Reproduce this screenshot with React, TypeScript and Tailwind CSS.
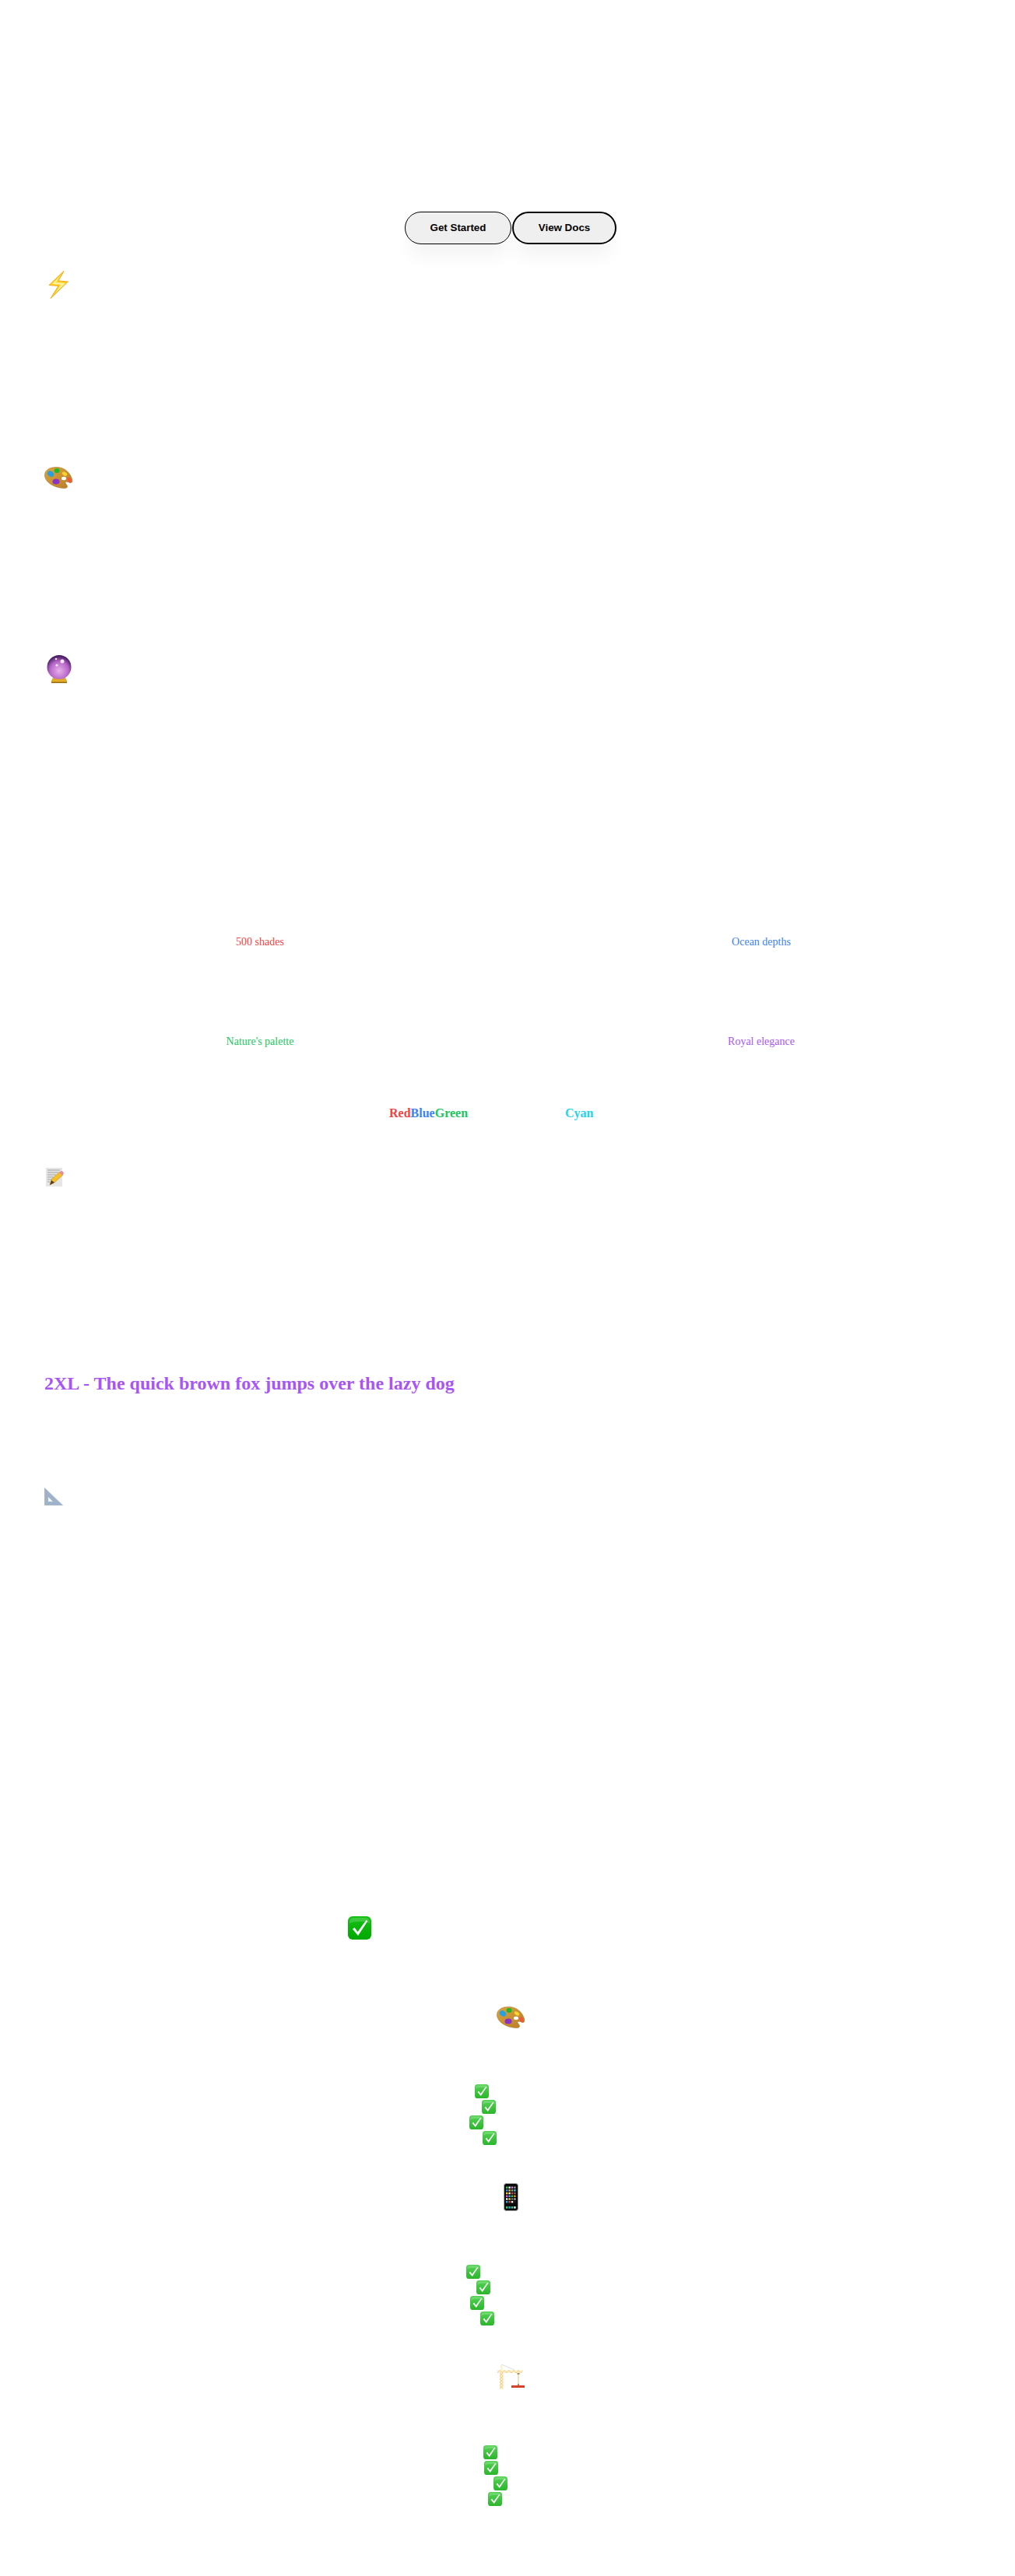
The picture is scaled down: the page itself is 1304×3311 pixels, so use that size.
import { useId } from "react";

function Bolt() {
  return (
    <svg width="25" height="36" viewBox="0 0 25 36" className="block ml-[7px] mt-[34px]">
      <path d="M19 .5 0 18.500l12 1L2 35.500l22.500-21.500-12.500-1z" fill="#ffd21f" />
      <path d="M15 6 4 17l11 1-7 11 13-13-12-1z" fill="#fff1a0" />
      <path d="M19 .5 0 18.500l12 1L2 35.500l22.500-21.500-12.500-1z" fill="none" stroke="#f9a61a" strokeWidth="1" />
    </svg>
  );
}

function Palette({ className }: { className: string }) {
  const id = useId();
  return (
    <svg width="36" height="29" viewBox="0 0 36 29" className={className}>
      <defs>
        <linearGradient id={id} x1="0" y1="0" x2="1" y2="1">
          <stop offset="0" stopColor="#dba63d" />
          <stop offset="1" stopColor="#b87c28" />
        </linearGradient>
      </defs>
      <path
        d="M.5 10C1 3 9 0 17 .5c9 .5 16 7 18.500 15 1 3 0 5.500-2 5-2-.5-4-2-6-1-1.500 1 1 3 2 5 .5 2.500-2 3.500-5 3C13 27 0 20 .5 10z"
        fill={`url(#${id})`}
        stroke="#9d6a22"
        strokeWidth=".5"
      />
      <ellipse cx="8" cy="9" rx="4.500" ry="3.500" transform="rotate(35 8 9)" fill="#2a9fe0" />
      <ellipse cx="16" cy="5" rx="3.500" ry="3" fill="#1fb82a" />
      <ellipse cx="26" cy="9" rx="3.500" ry="2.200" transform="rotate(30 26 9)" fill="#f6d32a" />
      <ellipse cx="32" cy="17" rx="2.200" ry="3.500" transform="rotate(-25 32 17)" fill="#f2573a" />
      <ellipse cx="15" cy="19" rx="4.500" ry="3.500" fill="#8a32c8" />
      <ellipse cx="25" cy="15" rx="3" ry="2.200" fill="#ffffff" />
    </svg>
  );
}

function CrystalBall() {
  const id = useId();
  return (
    <svg width="32" height="36" viewBox="0 0 32 36" className="block ml-[4px] mt-[213px]">
      <defs>
        <radialGradient id={id} cx=".5" cy=".65" r=".6">
          <stop offset="0" stopColor="#eab0ec" />
          <stop offset=".65" stopColor="#b565c6" />
          <stop offset="1" stopColor="#4a1f66" />
        </radialGradient>
      </defs>
      <path d="M8 29h16l2 4c1 2-1 3-3 3H9c-2 0-4-1-3-3z" fill="#e0ac28" />
      <path d="M6 34.500h20V36H6z" fill="#9a6d12" />
      <circle cx="16" cy="15.500" r="15.500" fill={`url(#${id})`} />
      <circle cx="20" cy="8" r="2.500" fill="#fbe4fb" />
      <circle cx="12" cy="5" r="1.300" fill="#fbe4fb" />
      <circle cx="13" cy="13" r="1.600" fill="#fbe4fb" />
    </svg>
  );
}

function Notepad() {
  return (
    <svg width="23" height="24" viewBox="0 0 23 24" className="block ml-[3px] mt-[58px]">
      <rect x="0" y="0" width="21" height="24" fill="#e6e6e6" />
      <path d="M2 3h16M2 6h14M2 9h11M2 12h8M2 15h6M2 18h3" stroke="#a0a0a0" strokeWidth="1" />
      <path d="M5 22 7 15 18 5l4 4-11 10z" fill="#f4bf2a" stroke="#c98d14" strokeWidth=".6" />
      <path d="M17 6l3-2c1 0 3 2 3 3l-2 3z" fill="#e78a9c" />
      <path d="M5 22l2-6 4 3z" fill="#4d4030" />
    </svg>
  );
}

function SetSquare() {
  return (
    <svg width="24" height="23" viewBox="0 0 24 23" className="block ml-[1px] mt-[118px]">
      <path d="M0 0 24 23H0zM5 12v6h6z" fillRule="evenodd" fill="#9fb2c9" stroke="#b9c8d8" strokeWidth=".5" />
    </svg>
  );
}

function Check({ size, from, to, className }: { size: number; from: string; to: string; className: string }) {
  const id = useId();
  return (
    <svg width={size} height={size} viewBox="0 0 30 30" className={className}>
      <defs>
        <linearGradient id={id} x1="0" y1="0" x2="0" y2="1">
          <stop offset="0" stopColor={from} />
          <stop offset="1" stopColor={to} />
        </linearGradient>
      </defs>
      <rect width="30" height="30" rx="6" fill={`url(#${id})`} />
      <path d="M2 9C2 4 4 2 8 2h14c4 0 6 2 6 7C20 6 10 6 2 9z" fill="#ffffff" opacity=".18" />
      <path d="M6 16.500 8.500 14.500l4 5.500L23.500 5l1.800 1.200L13 25z" fill="#ffffff" />
    </svg>
  );
}

function CheckList({ offsets, className }: { offsets: string[]; className: string }) {
  return (
    <div className={className}>
      {offsets.map((o, i) => (
        <Check key={i} size={18} from="#55d355" to="#2cb52c" className={"block mb-0.5 " + o} />
      ))}
    </div>
  );
}

function Phone() {
  const dots = ["#3fd15a", "#f4f4f4", "#d58be0", "#9a9a9a", "#2f9fe8", "#f0c040", "#b0a070", "#40d0e0", "#f6d030", "#f4f4f4", "#e84a3a", "#707070", "#f05ac0", "#30b0f0", "#40c050", "#f09a10", "#f4f4f4", "#f0d040", "#808080", "#b0b0b0", "#20b0f0", "#e84a3a", "#f4f4f4", "#202020"];
  return (
    <svg width="19" height="36" viewBox="0 0 19 36" className="block self-center mt-[47px]">
      <rect x=".5" y=".5" width="18" height="35" rx="3" fill="#0a0a0a" stroke="#a8a8a8" strokeWidth="1" />
      {dots.map((c, i) => (
        <rect key={i} x={3 + (i % 4) * 3.4} y={4.500 + Math.floor(i / 4) * 3.7} width="2.400" height="2.400" fill={c} />
      ))}
      {["#3fd15a", "#30b0f0", "#40d0a0", "#f4f4f4"].map((c, i) => (
        <rect key={c} x={3 + i * 3.4} y="30" width="2.400" height="2.600" fill={c} />
      ))}
    </svg>
  );
}

function Crane() {
  return (
    <svg width="35" height="32" viewBox="0 0 35 32" className="block self-center mt-[48px]">
      <path d="M5 0 22 7" stroke="#dcdcdc" strokeWidth="1" />
      <path d="M0 7.500h32v3.500H0zM3 11h4.500v21H3zM4 1h2.500v6.500H4z" fill="#fdf1d0" />
      <path d="M3 11l4.500 4L3 19l4.500 4L3 27l4.500 4M7.500 11 3 15l4.500 4L3 23l4.500 4L3 31" fill="none" stroke="#edc478" strokeWidth=".8" />
      <path d="M0 11l3-3.500L6 11l3-3.500 3 3.500 3-3.500 3 3.500 3-3.500 3 3.500 3-3.500 3 3.500 3-3.500" fill="none" stroke="#edc478" strokeWidth=".8" />
      <path d="M27 11v15" stroke="#e8dca8" strokeWidth="1.500" />
      <path d="M25.500 11h3v2h-3zM26 25h2v2h-2z" fill="#a8905a" />
      <rect x="18" y="27" width="17" height="3" fill="#d8402a" />
    </svg>
  );
}

export default function App() {
  return (
    <main className="h-[3311px] bg-white pl-14 pr-12 pt-[272px] flex flex-col font-['Liberation_Serif',serif] text-sm">
      <div className="flex justify-center gap-px font-['Liberation_Sans',sans-serif] text-[13.333px] font-bold text-black">
        <button className="h-[42px] w-[137px] rounded-full border border-black bg-[#efefef] shadow-[0_20px_25px_-5px_rgba(0,0,0,0.05)]">
          Get Started
        </button>
        <button className="h-[42px] w-[134px] rounded-full border-2 border-black bg-[#efefef] shadow-[0_20px_25px_-5px_rgba(0,0,0,0.05)]">
          View Docs
        </button>
      </div>

      <Bolt />
      <Palette className="block ml-[1px] mt-[216px]" />
      <CrystalBall />

      <div className="grid grid-cols-2 gap-x-[88px] gap-y-[108px] mt-[323px] text-center leading-5">
        <p className="text-[#ef4444]">500 shades</p>
        <p className="text-[#3b82f6]">Ocean depths</p>
        <p className="text-[#22c55e]">Nature's palette</p>
        <p className="text-[#a855f7]">Royal elegance</p>
      </div>

      <div className="flex mt-[70px] ml-[444px] text-base font-bold">
        <span className="text-[#ef4444]">Red</span>
        <span className="text-[#3b82f6]">Blue</span>
        <span className="text-[#22c55e]">Green</span>
        <span className="text-[#22d3ee] ml-[125px]">Cyan</span>
      </div>

      <Notepad />

      <h2 className="mt-[237px] text-2xl font-bold text-[#a855f7] ml-px">
        2XL - The quick brown fox jumps over the lazy dog
      </h2>

      <SetSquare />

      <Check size={30} from="#16c016" to="#00a800" className="block ml-[391px] mt-[528px]" />
      <Palette className="block self-center mt-[86px]" />
      <CheckList className="mt-[71px]" offsets={["ml-[554px]", "ml-[563px]", "ml-[547px]", "ml-[564px]"]} />
      <Phone />
      <CheckList className="mt-[69px]" offsets={["ml-[543px]", "ml-[556px]", "ml-[548px]", "ml-[561px]"]} />
      <Crane />
      <CheckList className="mt-[72px]" offsets={["ml-[565px]", "ml-[566px]", "ml-[578px]", "ml-[571px]"]} />
    </main>
  );
}
